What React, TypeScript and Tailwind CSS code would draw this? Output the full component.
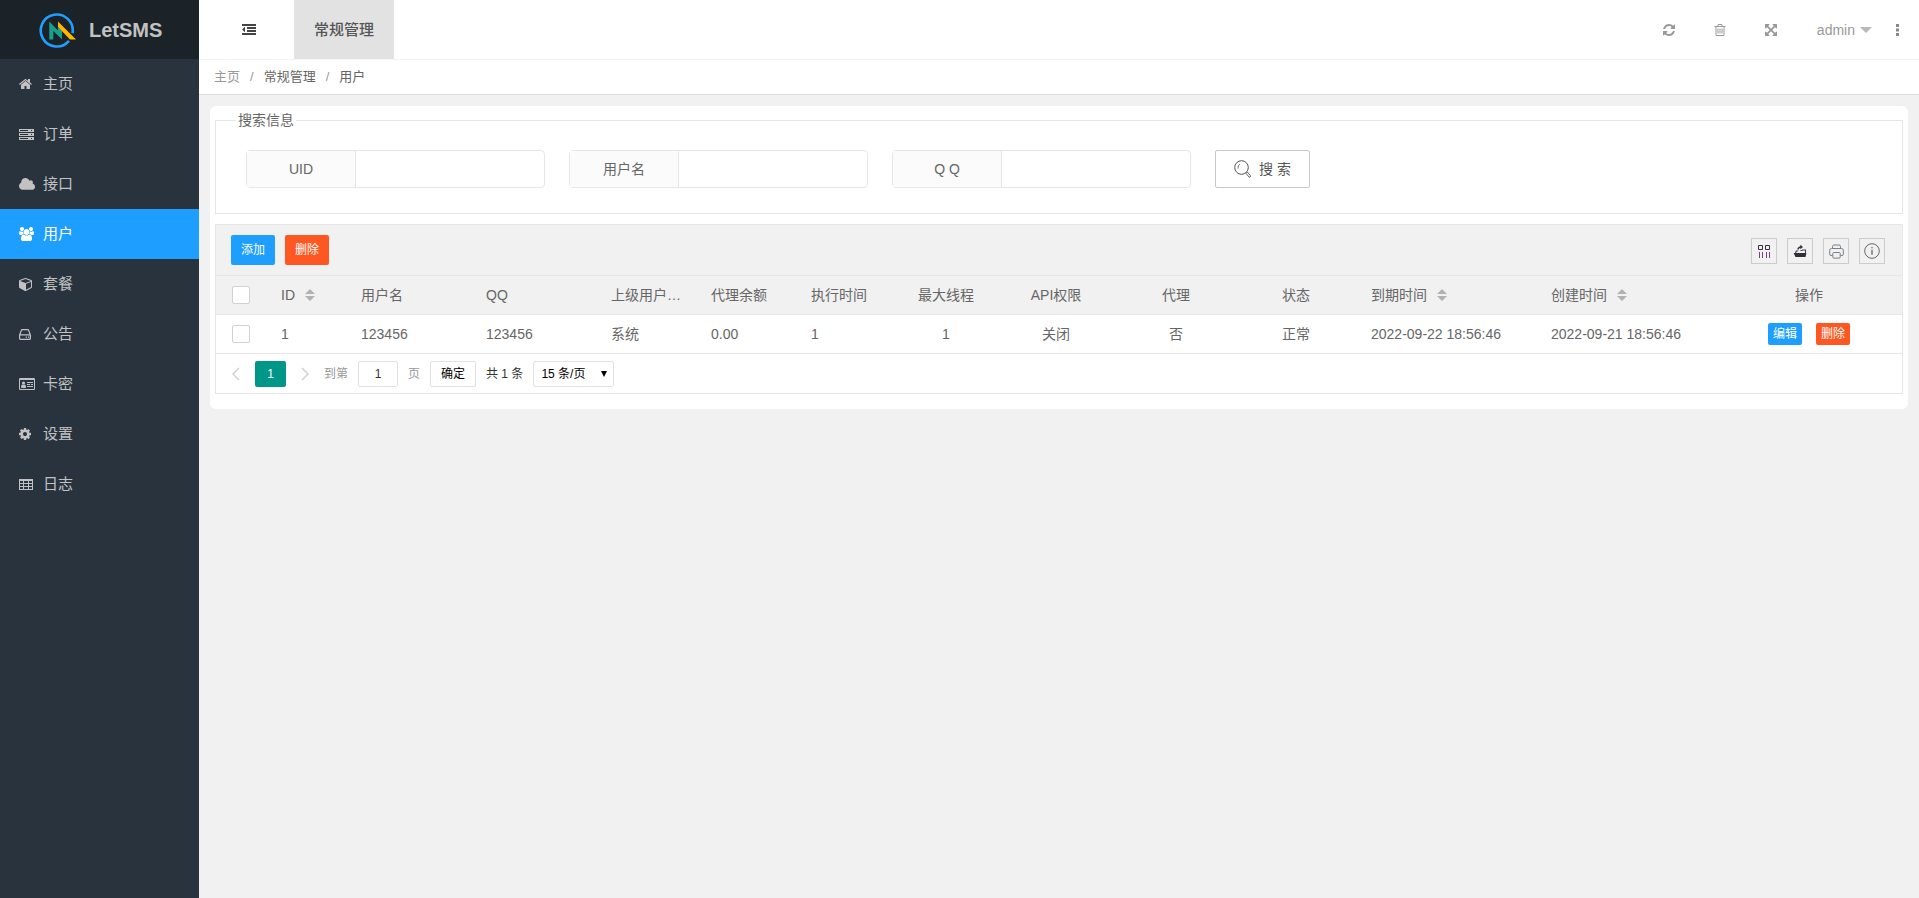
import type { ReactNode } from 'react';

type IconProps = { size?: number; className?: string };

function Glyph({ d, vb = '0 0 1792 1792', size = 14, className }: IconProps & { d: string; vb?: string }) {
  return (
    <svg viewBox={vb} height={size} className={className} fill="currentColor" aria-hidden="true">
      <path d={d} />
    </svg>
  );
}

const HOME =
  'M1472 992v480q0 26-19 45t-45 19h-384v-384h-256v384h-384q-26 0-45-19t-19-45v-480q0-1 .5-3t.5-3l575-474 575 474q1 2 1 6zm223-69l-62 74q-8 9-21 11h-3q-13 0-21-7l-692-577-692 577q-12 8-24 7-13-2-21-11l-62-74q-8-10-7-23.5t11-21.5l719-599q32-26 76-26t76 26l244 204v-195q0-14 9-23t23-9h192q14 0 23 9t9 23v408l219 182q10 8 11 21.5t-7 23.5z';
const CLOUD =
  'M1984 1152q0 159-112.5 271.5t-271.5 112.5h-1088q-185 0-316.5-131.5t-131.5-316.5q0-132 71-241.5t187-163.5q-2-28-2-43 0-212 150-362t362-150q158 0 286.5 88t187.5 230q70-62 166-62 106 0 181 75t75 181q0 75-41 138 129 30 213 134.5t84 239.5z';
const USERS =
  'M657 896q-162 5-265 128h-134q-82 0-138-40.5t-56-118.5q0-353 124-353 6 0 43.5 21t97.5 42.5 119 21.5q67 0 133-23-5 37-5 66 0 159 81 256zm1071 637q0 120-73 189.5t-194 69.5h-874q-121 0-194-69.5t-73-189.5q0-53 3.5-103.5t14-109 26.5-108.5 43-97.5 62-81 85.5-53.5 111.5-20q10 0 43 21.5t73 48 107 48 135 21.5 135-21.5 107-48 73-48 43-21.5q61 0 111.5 20t85.5 53.5 62 81 43 97.5 26.5 108.5 14 109 3.5 103.5zm-1024-1277q0 106-75 181t-181 75-181-75-75-181 75-181 181-75 181 75 75 181zm704 384q0 159-112.5 271.5t-271.5 112.5-271.5-112.5-112.5-271.5 112.5-271.5 271.5-112.5 271.5 112.5 112.5 271.5zm576 225q0 78-56 118.5t-138 40.5h-134q-103-123-265-128 81-97 81-256 0-29-5-66 66 23 133 23 59 0 119-21.5t97.5-42.5 43.5-21q124 0 124 353zm-128-609q0 106-75 181t-181 75-181-75-75-181 75-181 181-75 181 75 75 181z';
const CUBE =
  'M896 1629l640-349v-636l-640 233v752zm-64-865l698-254-698-254-698 254zm832-252v768q0 35-18 65t-49 47l-704 384q-28 16-61 16t-61-16l-704-384q-31-17-49-47t-18-65v-768q0-40 23-73t61-47l704-256q22-8 44-8t44 8l704 256q38 14 61 47t23 73z';
const REFRESH =
  'M1639 1056q0 5-1 7-64 268-268 434.5t-478 166.5q-146 0-282.5-55t-243.5-157l-129 129q-19 19-45 19t-45-19-19-45v-448q0-26 19-45t45-19h448q26 0 45 19t19 45-19 45l-137 137q71 66 161 102t187 36q134 0 250-65t186-179q11-17 53-117 8-23 30-23h192q13 0 22.5 9.5t9.5 22.5zm25-800v448q0 26-19 45t-45 19h-448q-26 0-45-19t-19-45 19-45l138-138q-148-137-349-137-134 0-250 65t-186 179q-11 17-53 117-8 23-30 23h-199q-13 0-22.5-9.5t-9.5-22.5v-7q65-268 270-434.5t480-166.5q146 0 284 55.5t245 156.5l130-129q19-19 45-19t45 19 19 45z';
const TRASH =
  'M704 736v576q0 14-9 23t-23 9h-64q-14 0-23-9t-9-23v-576q0-14 9-23t23-9h64q14 0 23 9t9 23zm256 0v576q0 14-9 23t-23 9h-64q-14 0-23-9t-9-23v-576q0-14 9-23t23-9h64q14 0 23 9t9 23zm256 0v576q0 14-9 23t-23 9h-64q-14 0-23-9t-9-23v-576q0-14 9-23t23-9h64q14 0 23 9t9 23zm128 724v-948h-896v948q0 22 7 40.5t14.5 27 10.5 8.5h832q3 0 10.5-8.5t14.5-27 7-40.5zm-672-1076h448l-48-117q-7-9-17-11h-317q-10 2-17 11zm928 32v64q0 14-9 23t-23 9h-96v948q0 83-47 143.5t-113 60.5h-832q-66 0-113-58.5t-47-141.5v-952h-96q-14 0-23-9t-9-23v-64q0-14 9-23t23-9h309l70-167q15-37 54-63t79-26h320q40 0 79 26t54 63l70 167h309q14 0 23 9t9 23z';
const ARROWS =
  'M1411 541l-355 355 355 355 144-144q29-31 70-14 39 17 39 59v448q0 26-19 45t-45 19h-448q-42 0-59-40-17-39 14-69l144-144-355-355-355 355 144 144q31 30 14 69-17 40-59 40h-448q-26 0-45-19t-19-45v-448q0-42 40-59 39-17 69 14l144 144 355-355-355-355-144 144q-19 19-45 19-12 0-24-5-40-17-40-59v-448q0-26 19-45t45-19h448q42 0 59 40 17 39-14 69l-144 144 355 355 355-355-144-144q-31-30-14-69 17-40 59-40h448q26 0 45 19t19 45v448q0 42-39 59-13 5-25 5-26 0-45-19z';
const OUTDENT =
  'M384 544v576q0 13-9.5 22.5t-22.5 9.5q-14 0-23-9l-288-288q-9-9-9-23t9-23l288-288q9-9 23-9 13 0 22.5 9.5t9.5 22.5zm1408 768v192q0 13-9.5 22.5t-22.5 9.5h-1728q-13 0-22.5-9.5t-9.5-22.5v-192q0-13 9.5-22.5t22.5-9.5h1728q13 0 22.5 9.5t9.5 22.5zm0-384v192q0 13-9.5 22.5t-22.5 9.5h-1088q-13 0-22.5-9.5t-9.5-22.5v-192q0-13 9.5-22.5t22.5-9.5h1088q13 0 22.5 9.5t9.5 22.5zm0-384v192q0 13-9.5 22.5t-22.5 9.5h-1088q-13 0-22.5-9.5t-9.5-22.5v-192q0-13 9.5-22.5t22.5-9.5h1088q13 0 22.5 9.5t9.5 22.5zm0-384v192q0 13-9.5 22.5t-22.5 9.5h-1728q-13 0-22.5-9.5t-9.5-22.5v-192q0-13 9.5-22.5t22.5-9.5h1728q13 0 22.5 9.5t9.5 22.5z';
const COG =
  'M1152 896q0-106-75-181t-181-75-181 75-75 181 75 181 181 75 181-75 75-181zm512-109v222q0 12-8 23t-20 13l-185 28q-19 54-39 91 35 50 107 138 10 12 10 25t-9 23q-27 37-99 108t-94 71q-12 0-26-9l-138-108q-44 23-91 38-16 136-29 186-7 28-36 28h-222q-14 0-24.5-8.5t-11.5-21.5l-28-184q-49-16-90-37l-141 107q-10 9-25 9-14 0-25-11-126-114-165-168-7-10-7-23 0-12 8-23 15-21 51-66.5t54-70.5q-27-50-41-99l-183-27q-13-2-21-12.5t-8-23.5v-222q0-12 8-23t19-13l186-28q14-46 39-92-40-57-107-138-10-12-10-24 0-10 9-23 26-36 98.5-107.5t94.5-71.5q13 0 26 10l138 107q44-23 91-38 16-136 29-186 7-28 36-28h222q14 0 24.5 8.5t11.5 21.5l28 184q49 16 90 37l142-107q9-9 24-9 13 0 25 10 129 119 165 170 7 8 7 22 0 12-8 23-15 21-51 66.5t-54 70.5q26 50 41 98l183 28q13 2 21 12.5t8 23.5z';

const ServerIcon = () => (
  <svg viewBox="0 0 15 11" width="15" height="11" shapeRendering="crispEdges" aria-hidden="true">
    {[0, 4, 8].map((y) => (
      <g key={y}>
        <rect x="0" y={y} width="15" height="3" fill="currentColor" />
        <rect x="1" y={y + 1} width="8" height="1" fill="#28333e" />
        <rect x="12" y={y + 1} width="1" height="1" fill="#28333e" />
      </g>
    ))}
  </svg>
);

const HddIcon = () => (
  <svg viewBox="0 0 12 11" width="12" height="11" fill="none" stroke="currentColor" aria-hidden="true">
    <path d="M.6 6L2.4 1.2Q2.6.6 3.2.6h5.6q.6 0 .8.6L11.4 6v3.6q0 .8-.8.8H1.400q-.8 0-.8-.8zM.6 5.900h10.800" strokeWidth="1.2" />
    <path d="M6.700 8.200h1.300M9 8.200h1.300" strokeWidth="1.200" />
  </svg>
);

const IdCardIcon = () => (
  <svg viewBox="0 0 16 12" width="16" height="12" fill="currentColor" aria-hidden="true">
    <path d="M1.200 0h13.600Q16 0 16 1.200v9.600q0 1.200-1.200 1.200H1.200Q0 12 0 10.800V1.200Q0 0 1.200 0zM1 2v8.600q0 .4.4.4h13.200q.4 0 .4-.4V2z" fillRule="evenodd" />
    <circle cx="4.500" cy="5" r="1.600" />
    <path d="M2.200 10V8.200q0-1.500 1.200-1.700 1 .7 2.200 0 1.300.2 1.300 1.700V10zM8 4h6v1H8zM8 6h3v1H8zM12 6h2v1h-2zM8 8h6v1H8z" />
  </svg>
);

const TableIcon = () => (
  <svg viewBox="0 0 14 11" width="14" height="11" shapeRendering="crispEdges" aria-hidden="true">
    <rect width="14" height="11" fill="currentColor" />
    {[2, 5, 8].flatMap((y) => [
      <rect key={`a${y}`} x="1" y={y} width="3" height="2" fill="#28333e" />,
      <rect key={`b${y}`} x="5" y={y} width="4" height="2" fill="#28333e" />,
      <rect key={`c${y}`} x="10" y={y} width="3" height="2" fill="#28333e" />,
    ])}
  </svg>
);

const LogoMark = () => (
  <svg viewBox="0 0 40 36" width="40" height="36" aria-hidden="true">
    <path d="M31 28.800A16 16 0 1 1 34.500 21.300" fill="none" stroke="#1e9fff" strokeWidth="2.600" />
    <path d="M11.300 9.500l8.700 9V15l4 4v8.500L15.300 19v8.500h-4z" fill="#17a08f" />
    <path d="M20 9.500l18 18h-6L20 15z" fill="#ffb800" />
  </svg>
);

const SortIcon = () => (
  <svg viewBox="0 0 10 12" width="10" height="12" fill="#b2b2b2" aria-hidden="true">
    <path d="M0 5l5-5 5 5zM0 7l5 5 5-5z" />
  </svg>
);

const menu: { label: string; icon: ReactNode; active?: boolean }[] = [
  { label: '主页', icon: <Glyph d={HOME} vb="64 0 1664 1792" /> },
  { label: '订单', icon: <ServerIcon /> },
  { label: '接口', icon: <Glyph d={CLOUD} vb="64 0 1984 1792" size={15} /> },
  { label: '用户', icon: <Glyph d={USERS} vb="64 0 1920 1792" />, active: true },
  { label: '套餐', icon: <Glyph d={CUBE} vb="0 0 1664 1792" /> },
  { label: '公告', icon: <HddIcon /> },
  { label: '卡密', icon: <IdCardIcon /> },
  { label: '设置', icon: <Glyph d={COG} vb="128 0 1536 1792" /> },
  { label: '日志', icon: <TableIcon /> },
];

const columns: { title: string; value: string; width: string; center?: boolean; sort?: boolean }[] = [
  { title: 'ID', value: '1', width: 'w-20', sort: true },
  { title: '用户名', value: '123456', width: 'w-[125px]' },
  { title: 'QQ', value: '123456', width: 'w-[125px]' },
  { title: '上级用户…', value: '系统', width: 'w-[100px]' },
  { title: '代理余额', value: '0.00', width: 'w-[100px]' },
  { title: '执行时间', value: '1', width: 'w-[100px]' },
  { title: '最大线程', value: '1', width: 'w-[100px]', center: true },
  { title: 'API权限', value: '关闭', width: 'w-[120px]', center: true },
  { title: '代理', value: '否', width: 'w-[120px]', center: true },
  { title: '状态', value: '正常', width: 'w-[120px]', center: true },
  { title: '到期时间', value: '2022-09-22 18:56:46', width: 'w-[180px]', sort: true },
  { title: '创建时间', value: '2022-09-21 18:56:46', width: 'w-[180px]', sort: true },
];

function Sidebar() {
  return (
    <aside className="w-[199px] shrink-0 bg-[#28333e] text-[#c2c2c2]">
      <a href="#" className="flex h-[59px] items-center gap-[11px] bg-[#1b2228] pl-[38px]">
        <LogoMark />
        <span className="text-xl font-bold">LetSMS</span>
      </a>
      <nav>
        {menu.map((m) => (
          <a
            key={m.label}
            href="#"
            className={`flex h-[50px] items-center gap-1 pl-[19px] text-[15px] ${m.active ? 'bg-[#1e9fff] text-white' : ''}`}
          >
            <span className="flex w-5 items-center">{m.icon}</span>
            <span>{m.label}</span>
          </a>
        ))}
      </nav>
    </aside>
  );
}

function Header() {
  return (
    <header className="flex h-[60px] items-stretch justify-between border-b border-[#f4f4f4] bg-white">
      <div className="flex">
        <button type="button" aria-label="收起菜单" className="flex w-[95px] items-center justify-center pl-2 pr-1 text-[#444]">
          <Glyph d={OUTDENT} />
        </button>
        <a href="#" className="flex w-[100px] items-center justify-center bg-[#e2e2e2] text-[15px] font-medium text-[#555]">
          常规管理
        </a>
      </div>
      <div className="flex items-center pr-5 text-sm text-[#999]">
        <button type="button" aria-label="刷新" className="flex w-[51px] justify-center">
          <Glyph d={REFRESH} />
        </button>
        <button type="button" aria-label="清理缓存" className="flex w-[51px] justify-center">
          <Glyph d={TRASH} />
        </button>
        <button type="button" aria-label="全屏" className="flex w-[51px] justify-center">
          <Glyph d={ARROWS} />
        </button>
        <button type="button" className="ml-5 flex items-center gap-[5px]">
          admin
          <svg viewBox="0 0 12 6" width="12" height="6" fill="#b9b9b9" aria-hidden="true">
            <path d="M0 0h12L6 6z" />
          </svg>
        </button>
        <button type="button" aria-label="更多" className="ml-6">
          <svg viewBox="0 0 3 12" width="3" height="12" fill="#888" aria-hidden="true">
            <path d="M0 0h3v3H0zM0 4.500h3v3H0zM0 9h3v3H0z" />
          </svg>
        </button>
      </div>
    </header>
  );
}

function SearchField({ id, label }: { id: string; label: string }) {
  return (
    <div className="flex h-[38px] w-[299px] rounded-sm border border-[#e6e6e6]">
      <label
        htmlFor={id}
        className="flex w-[109px] shrink-0 items-center justify-center border-r border-[#e6e6e6] bg-[#fbfbfb]"
      >
        {label}
      </label>
      <input id={id} type="text" className="min-w-0 flex-1 px-2.5 outline-none" />
    </div>
  );
}

function ToolIcon({ label, children }: { label: string; children: ReactNode }) {
  return (
    <button type="button" aria-label={label} className="flex size-[26px] items-center justify-center border border-[#ccc]">
      {children}
    </button>
  );
}

const checkbox = 'block size-[18px] appearance-none rounded-xs border border-[#d2d2d2] bg-white';

function UserTable() {
  return (
    <section className="mt-2.5 border border-[#e6e6e6]">
      <div className="flex h-[51px] items-center justify-between border-b border-[#e6e6e6] bg-[#f1f1f1] pl-[15px] pr-[17px]">
        <div className="flex gap-2.5 text-xs text-white">
          <button type="button" className="h-[30px] w-11 rounded-xs bg-[#1e9fff]">添加</button>
          <button type="button" className="h-[30px] w-11 rounded-xs bg-[#ff5722]">删除</button>
        </div>
        <div className="flex gap-2.5 pt-0.5">
          <ToolIcon label="筛选列">
            <svg viewBox="0 0 14 14" width="14" height="14" fill="none" aria-hidden="true">
              <path d="M1.500 1.500h4v4h-4zM8.500 1.500h4v4h-4z" stroke="#333" />
              <path d="M2.500 8v6M5.500 8v6M9.500 8v6M12.500 8v6" stroke="#7a3f86" />
            </svg>
          </ToolIcon>
          <ToolIcon label="导出">
            <svg viewBox="0 0 14 14" width="14" height="14" aria-hidden="true">
              <path d="M.6 9h12.800L12.500 13H2.500z" fill="#2f2f36" />
              <path d="M2.500 9l.8-2h2M9 6h3.500v3.500M7.500 6.500h1.800" fill="none" stroke="#444" strokeWidth="1.100" />
              <path d="M4.800 5.500Q5.500 3 8 3" fill="none" stroke="#333" strokeWidth="1.300" />
              <path d="M7.300.8L10 3 7.300 5.200z" fill="#333" />
            </svg>
          </ToolIcon>
          <ToolIcon label="打印">
            <svg viewBox="0 0 15 15" width="15" height="15" fill="none" stroke="#75828c" aria-hidden="true">
              <path d="M3.500 4.500v-2q0-1.500 1.500-1.500h5q1.500 0 1.500 1.500v2" />
              <path d="M3.500 11.500H2q-1.300 0-1.300-1.300V6.300Q.7 4.500 2.500 4.500h10q1.800 0 1.800 1.800v3.900q0 1.300-1.300 1.300h-1.500" />
              <rect x="3.800" y="8.500" width="7.400" height="5.600" rx="1" />
            </svg>
          </ToolIcon>
          <ToolIcon label="提示">
            <svg viewBox="0 0 16 16" width="16" height="16" fill="none" stroke="#666" aria-hidden="true">
              <circle cx="8" cy="8" r="7.300" />
              <path d="M8 6.800v5" strokeWidth="1.300" />
              <circle cx="8" cy="4.800" r=".8" fill="#666" stroke="none" />
            </svg>
          </ToolIcon>
        </div>
      </div>
      <table className="w-full table-fixed border-separate border-spacing-0">
        <thead>
          <tr className="h-[39px] bg-[#f1f1f1]">
            <th className="w-[50px] border-b border-[#e6e6e6] pl-4">
              <input type="checkbox" aria-label="全选" className={checkbox} />
            </th>
            {columns.map((c) => (
              <th
                key={c.title}
                className={`${c.width} border-b border-[#e6e6e6] px-[15px] font-normal ${c.center ? 'text-center' : 'text-left'}`}
              >
                {c.sort ? (
                  <span className="flex items-center gap-2.5">
                    {c.title}
                    <SortIcon />
                  </span>
                ) : (
                  <span className="block whitespace-nowrap">{c.title}</span>
                )}
              </th>
            ))}
            <th className="border-b border-[#e6e6e6] px-[15px] text-center font-normal">操作</th>
          </tr>
        </thead>
        <tbody>
          <tr className="h-[39px]">
            <td className="border-b border-[#e6e6e6] pl-4">
              <input type="checkbox" aria-label="选择用户 1" className={checkbox} />
            </td>
            {columns.map((c) => (
              <td
                key={c.title}
                className={`border-b border-[#e6e6e6] px-[15px] whitespace-nowrap ${c.center ? 'text-center' : 'text-left'}`}
              >
                {c.value}
              </td>
            ))}
            <td className="border-b border-[#e6e6e6]">
              <div className="flex justify-center gap-3.5 text-xs text-white">
                <button type="button" className="h-[22px] w-[34px] rounded-xs bg-[#1e9fff]">编辑</button>
                <button type="button" className="h-[22px] w-[34px] rounded-xs bg-[#ff5722]">删除</button>
              </div>
            </td>
          </tr>
        </tbody>
      </table>
      <Pager />
    </section>
  );
}

function Pager() {
  return (
    <div className="flex h-[39px] items-center gap-2.5 pl-[15px] text-xs text-[#333]">
      <button type="button" aria-label="上一页" className="text-[#d2d2d2]">
        <svg viewBox="0 0 10 14" width="10" height="14" fill="none" stroke="currentColor" strokeWidth="1.500" aria-hidden="true">
          <path d="M8 1L2 7l6 6" />
        </svg>
      </button>
      <button type="button" className="ml-1 h-[26px] w-[31px] rounded-xs bg-[#009688] text-white">1</button>
      <button type="button" aria-label="下一页" className="ml-1 text-[#d2d2d2]">
        <svg viewBox="0 0 10 14" width="10" height="14" fill="none" stroke="currentColor" strokeWidth="1.500" aria-hidden="true">
          <path d="M2 1l6 6-6 6" />
        </svg>
      </button>
      <label htmlFor="page" className="ml-1 text-[#999]">到第</label>
      <input
        id="page"
        type="text"
        defaultValue="1"
        className="h-[26px] w-10 rounded-xs border border-[#e2e2e2] text-center outline-none"
      />
      <span className="text-[#999]">页</span>
      <button type="button" className="h-[26px] w-[46px] rounded-xs border border-[#e2e2e2] text-black">确定</button>
      <span>共 1 条</span>
      <div className="relative">
        <select
          aria-label="每页条数"
          className="block h-[26px] w-[81px] appearance-none rounded-xs border border-[#e2e2e2] bg-white pl-[7px] text-black"
        >
          <option>15 条/页</option>
        </select>
        <svg viewBox="0 0 6 6" width="6" height="6" className="pointer-events-none absolute top-2.5 right-[7px]" aria-hidden="true">
          <path d="M0 0h6L3 6z" />
        </svg>
      </div>
    </div>
  );
}

export default function App() {
  return (
    <div className="flex min-h-screen bg-[#f1f1f1] font-['Liberation_Sans','Noto_Sans_CJK_SC',sans-serif] text-sm text-[#666]">
      <Sidebar />
      <div className="min-w-0 flex-1">
        <Header />
        <nav aria-label="面包屑" className="flex h-[35px] items-center gap-2.5 border-b border-[#dcdcdc] bg-white px-[15px] text-[13px]">
          <a href="#" className="text-[#999]">主页</a>
          <span className="text-[#999]">/</span>
          <a href="#">常规管理</a>
          <span className="text-[#999]">/</span>
          <span>用户</span>
        </nav>
        <main className="mx-[11px] mt-[11px] rounded-md bg-white px-[5px] pt-[5px] pb-[15px]">
          <fieldset className="border border-[#e6e6e6]">
            <legend className="ml-5 px-0.5 leading-[18px]">搜索信息</legend>
            <form className="flex flex-wrap items-center gap-6 px-[30px] pt-[21px] pb-[25px]">
              <SearchField id="uid" label="UID" />
              <SearchField id="username" label="用户名" />
              <SearchField id="qq" label="Q Q" />
              <button
                type="button"
                className="flex h-[38px] w-[95px] items-center justify-center gap-2 rounded-xs border border-[#c9c9c9] text-[#555]"
              >
                <svg viewBox="0 0 17 18" width="17" height="18" fill="none" stroke="currentColor" aria-hidden="true">
                  <circle cx="7.500" cy="7.500" r="6.800" />
                  <path d="M4 8.500Q3.600 5.500 6 4" strokeWidth=".8" />
                  <path d="M12 13.300l1.300-1.300 3.200 3.700q.3 1.600-1.300 1.500z" strokeWidth=".9" />
                </svg>
                搜 索
              </button>
            </form>
          </fieldset>
          <UserTable />
        </main>
      </div>
    </div>
  );
}
